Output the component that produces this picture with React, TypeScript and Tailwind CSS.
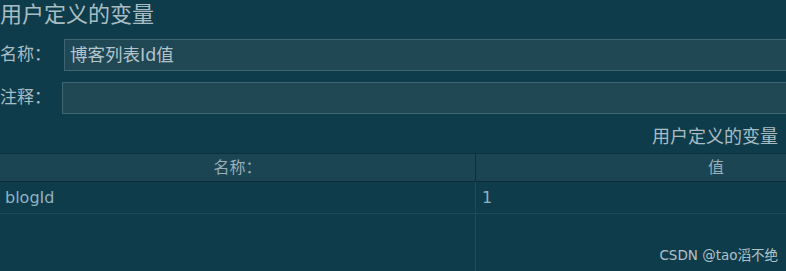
import React from "react";

const font = { fontFamily: '"DejaVu Sans", "Noto Sans CJK SC", sans-serif' };

type Row = { name: string; value: string };

const rows: Row[] = [{ name: "blogId", value: "1" }];

const App: React.FC = () => {
  return (
    <div
      className="relative w-[786px] h-[271px] overflow-hidden bg-[#0f3c4b] text-[#a9bcc3] flex flex-col"
      style={font}
    >
      {/* title */}
      <div className="h-[39px] pt-[1px] text-[22px] leading-[27px]">用户定义的变量</div>

      {/* form */}
      <div className="flex flex-col gap-[11px]">
        <div className="flex items-center h-[32px]">
          <span className="w-[64px] shrink-0 text-[17px]">名称：</span>
          <div className="flex-1 -mr-[4px] h-[32px] bg-[#1f4754] border border-[#3d6671] pl-[5px] flex items-center text-[17.5px] text-[#b3c4cb]">
            博客列表Id值
          </div>
        </div>
        <div className="flex items-center h-[32px]">
          <span className="w-[62px] shrink-0 text-[17px]">注释：</span>
          <div className="flex-1 -mr-[4px] h-[32px] bg-[#1f4754] border border-[#3d6671]" />
        </div>
      </div>

      {/* table caption */}
      <div className="h-[39px] flex items-center justify-end pr-[8px] pt-[6px] text-[18px]">
        用户定义的变量
      </div>

      {/* table, wider than the window */}
      <div className="flex-1 w-[956px] flex flex-col text-[16px] text-[#8fb2c2]">
        <div className="grid grid-cols-[476px_1fr] h-[29px] bg-[#1c4553] border-y border-[#0b2f3b]">
          <div className="flex items-center justify-center border-r border-[#0b2f3b] text-[#98aeb8]">名称：</div>
          <div className="flex items-center justify-center text-[#98aeb8]">值</div>
        </div>
        {rows.map((r) => (
          <div key={r.name} className="grid grid-cols-[476px_1fr] h-[32px] border-b border-[#1f4b59]">
            <div className="flex items-center pl-[5px] border-r border-[#1f4b59]">{r.name}</div>
            <div className="flex items-center pl-[6px]">{r.value}</div>
          </div>
        ))}
        <div className="flex-1 grid grid-cols-[476px_1fr]">
          <div className="border-r border-[#1f4b59]" />
          <div />
        </div>
      </div>

      {/* watermark */}
      <div className="absolute right-[8px] bottom-[6px] text-[13.5px] text-[#b0c2c9]">CSDN @tao滔不绝</div>
    </div>
  );
};

export default App;
